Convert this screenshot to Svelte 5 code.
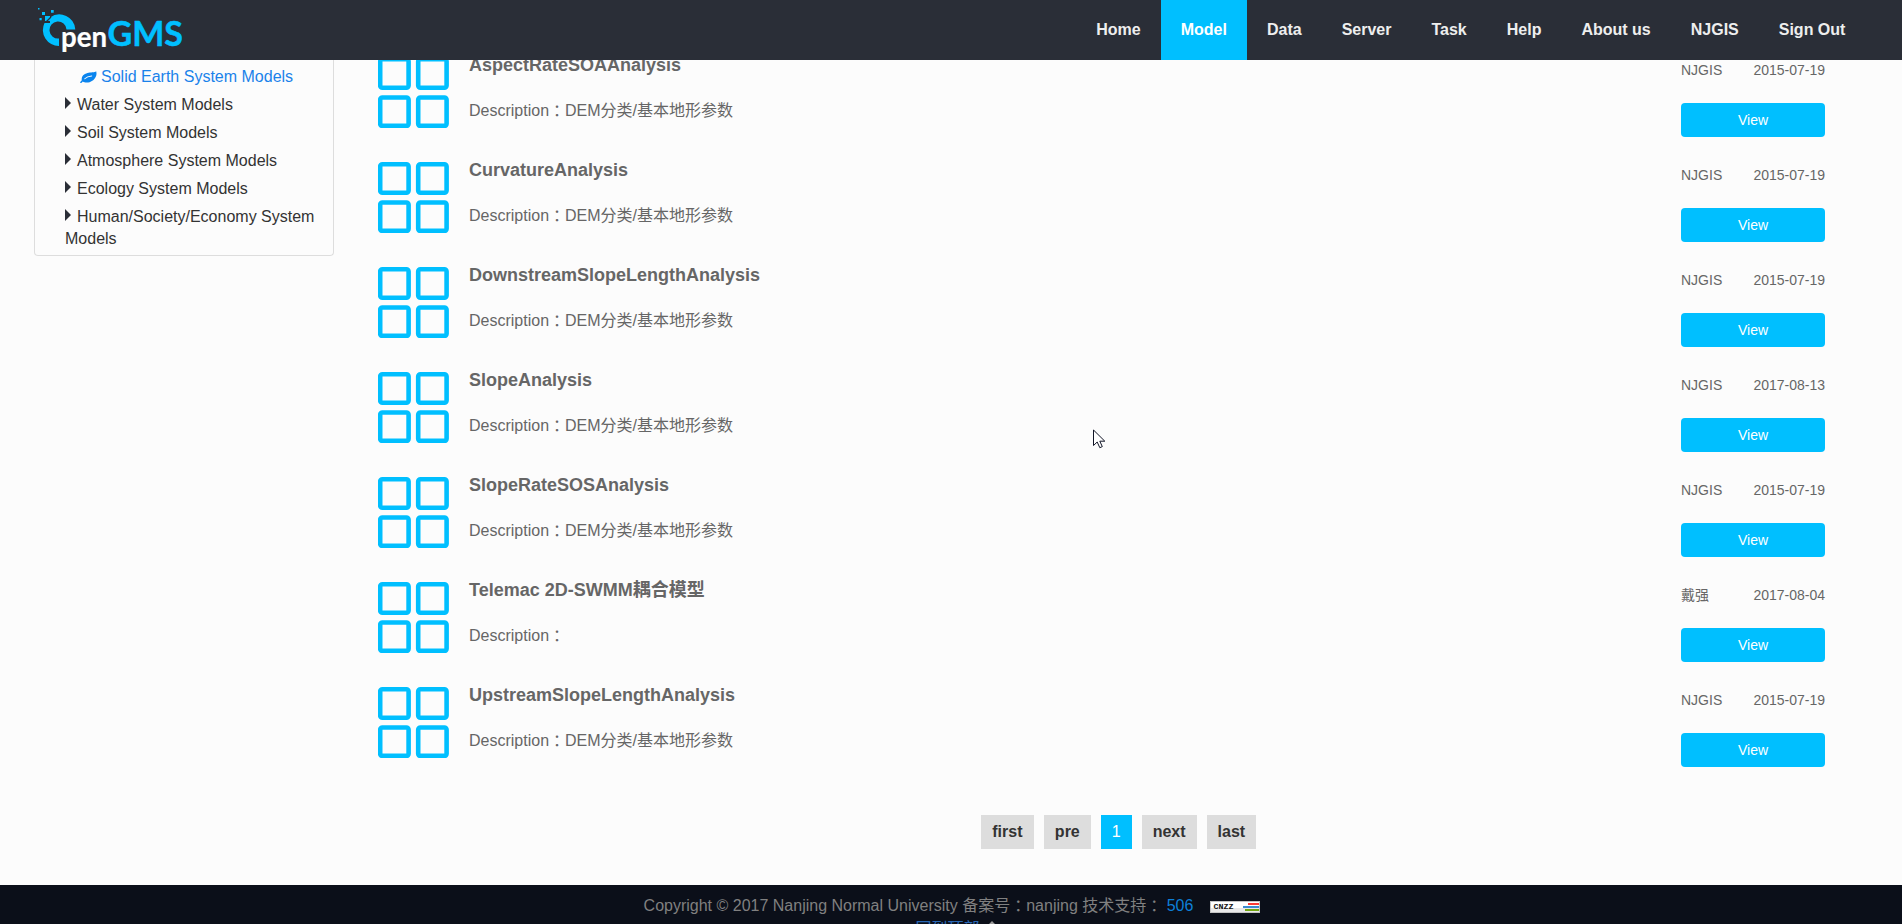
<script>
  const nav = ['Home', 'Model', 'Data', 'Server', 'Task', 'Help', 'About us', 'NJGIS', 'Sign Out'];
  const categories = [
    'Water System Models',
    'Soil System Models',
    'Atmosphere System Models',
    'Ecology System Models',
    'Human/Society/Economy System Models'
  ];
  const dem = 'DEM分类/基本地形参数';
  const models = [
    { name: 'AspectRateSOAAnalysis', text: dem, author: 'NJGIS', date: '2015-07-19' },
    { name: 'CurvatureAnalysis', text: dem, author: 'NJGIS', date: '2015-07-19' },
    { name: 'DownstreamSlopeLengthAnalysis', text: dem, author: 'NJGIS', date: '2015-07-19' },
    { name: 'SlopeAnalysis', text: dem, author: 'NJGIS', date: '2017-08-13' },
    { name: 'SlopeRateSOSAnalysis', text: dem, author: 'NJGIS', date: '2015-07-19' },
    { name: 'Telemac 2D-SWMM耦合模型', text: '', author: '戴强', date: '2017-08-04' },
    { name: 'UpstreamSlopeLengthAnalysis', text: dem, author: 'NJGIS', date: '2015-07-19' }
  ];
  const pages = ['first', 'pre', '1', 'next', 'last'];
</script>

<div class="page">
  <header>
    <svg class="logo" width="150" height="54" viewBox="36 4 150 54" role="img" aria-label="OpenGMS">
      <g fill="#00bfff">
        <path d="M50 17.500 A16 16 0 0 1 75.300 29.500 H66.500 A8.500 8.500 0 1 0 59 38.500 V46 A16 16 0 0 1 44.500 23 H50 Z" />
        <path d="M38 8h1.500v1.500H38zM42 12h3v3h-3zM51 10h2.700v2.700H51zM39.500 18h2.200v2.200h-2.200zM45 16h5v5h-5z" />
      </g>
      <path d="M46 22l5-5" stroke="#2a2e37" stroke-width="1.200" />
      <text x="61" y="46.500" class="pen" textLength="46" lengthAdjust="spacingAndGlyphs">pen</text>
      <text x="107.500" y="46.300" class="gms" textLength="75.500" lengthAdjust="spacingAndGlyphs">GMS</text>
    </svg>
    <nav>
      {#each nav as item}
        <a class:active={item === 'Model'}>{item}</a>
      {/each}
    </nav>
  </header>

  <main>
    <aside>
      <div class="item leaf">
        <svg width="17" height="13" viewBox="0 0 16 13" preserveAspectRatio="none">
          <path fill="#0a84ee" d="M15.200 0.200C13.800 1.500 10 1.100 7 2.100C3 3.400 1 5.900 1.700 9.200C1.300 9.900 0 10.800 0.200 11.700C0.400 12.500 1.400 12.200 2.600 10.500C4 11.600 6.500 12 9 11.200C13.500 9.700 16.600 5 15.200 0.200Z" />
          <path fill="none" stroke="#fcfcfc" stroke-width="1" stroke-linecap="round" d="M4.500 7.800C6 6 8 5.100 11 4.900" />
        </svg><span>Solid Earth System Models</span>
      </div>
      {#each categories as category}
        <div class="item"><i></i>{category}</div>
      {/each}
    </aside>

    <section>
      {#each models as model}
        <article>
          <svg class="grid" width="71" height="71" viewBox="0 0 71 71" fill="none" stroke="#00bfff" stroke-width="4.600">
            <rect x="2.200" y="2.300" width="28.400" height="28.400" rx="2.200" />
            <rect x="40.200" y="2.300" width="28.400" height="28.400" rx="2.200" />
            <rect x="2.200" y="40.500" width="28.400" height="28.400" rx="2.200" />
            <rect x="40.200" y="40.500" width="28.400" height="28.400" rx="2.200" />
          </svg>
          <div class="info">
            <h3>{model.name}</h3>
            <p>Description<span class="colon">：</span>{model.text}</p>
          </div>
          <div class="side">
            <div class="meta"><span>{model.author}</span><span>{model.date}</span></div>
            <button>View</button>
          </div>
        </article>
      {/each}
      <div class="pager">
        {#each pages as page}
          <a class:current={page === '1'}>{page}</a>
        {/each}
      </div>
    </section>
  </main>

  <footer>
    <div class="line">
      <span>Copyright © 2017 Nanjing Normal University 备案号<span class="colon">：</span>nanjing 技术支持<span class="colon">：</span> <a>506</a></span>
      <svg width="50" height="12" viewBox="0 0 50 12" shape-rendering="crispEdges">
        <path fill="#c4c4c4" d="M0 0h50v12H0z" />
        <path fill="#fff" d="M1 1h48v6H1z" />
        <path fill="#e9e9e9" d="M1 7h48v4H1z" />
        <path fill="#fb3b35" d="M38 2h11v2H38z" />
        <path fill="#3b8ad0" d="M33 5h16v2H33z" />
        <path fill="#71a411" d="M35 8h14v2H35z" />
        <text x="3.500" y="8" class="cnzz" textLength="20" lengthAdjust="spacingAndGlyphs">CNZZ</text>
      </svg>
    </div>
    <div class="top">
      <a>回到顶部</a>
      <svg width="12" height="12" viewBox="0 0 12 12"><path fill="#999" d="M6 0l6 6H8v6H4V6H0z" /></svg>
    </div>
  </footer>

  <svg class="cursor" width="13" height="20" viewBox="0 0 13 20">
    <path fill="#fff" stroke="#111526" d="M.5 1v15.500l3.700-3.500 2.600 5.700 2.500-1.100-2.500-5.400h5z" />
  </svg>
</div>

<style>
  :global(body) {
    margin: 0;
    overflow: hidden;
  }
  .page {
    position: relative;
    box-sizing: border-box;
    height: 924px;
    display: flex;
    flex-direction: column;
    overflow: hidden;
    background: #fcfcfc;
    font: 16px/22px Arial, 'Liberation Sans', 'Noto Sans CJK SC', sans-serif;
    color: #666;
  }
  header {
    flex: 0 0 60px;
    box-sizing: border-box;
    padding: 0 36.600px 0 36px;
    display: flex;
    justify-content: space-between;
    background: #2a2e37;
  }
  .logo {
    margin-top: 4px;
  }
  .logo text {
    font-family: Lato, sans-serif;
    font-weight: 700;
  }
  .pen {
    font-size: 28px;
    fill: #fff;
    stroke: #fff;
    stroke-width: 0.2px;
  }
  .gms {
    font-size: 34.500px;
    fill: #00bfff;
    stroke: #00bfff;
    stroke-width: 0.500px;
  }
  nav {
    display: flex;
  }
  nav a {
    padding: 0 20px;
    line-height: 59px;
    font-weight: 700;
    color: #eee;
  }
  nav a.active {
    background: #00bfff;
    color: #fff;
  }
  main {
    flex: 0 0 825px;
    height: 825px;
    display: flex;
    align-items: flex-start;
    overflow: hidden;
  }
  aside {
    box-sizing: border-box;
    width: 300px;
    height: 196px;
    margin-left: 34px;
    padding: 3px 10px 0 30px;
    border: 1px solid #ddd;
    border-top: 0;
    border-radius: 0 0 4px 4px;
    color: #333;
  }
  .item {
    padding: 3px 0;
  }
  .item i {
    display: inline-block;
    margin-right: 6px;
    vertical-align: 1px;
    border: solid transparent;
    border-width: 6.500px 0 6.500px 6px;
    border-left-color: #2a2e37;
  }
  .leaf {
    display: flex;
    align-items: center;
    gap: 4px;
    padding-left: 15px;
    color: #1a82ea;
  }
  section {
    flex: 1;
    margin-left: 44px;
    margin-right: 77px;
    margin-top: -3px;
  }
  article {
    display: flex;
    height: 105px;
  }
  .info {
    flex: 1;
    margin-left: 20px;
  }
  h3 {
    margin: -3px 0 0;
    height: 22px;
    font-size: 18px;
    line-height: 22px;
  }
  p {
    margin: 24px 0 0;
    line-height: 22px;
    height: 22px;
  }
  .colon {
    position: relative;
    top: 1px;
    font-family: 'Noto Sans CJK JP', sans-serif;
    line-height: 1;
  }
  .side {
    width: 144px;
    font-size: 14px;
  }
  .meta {
    display: flex;
    justify-content: space-between;
    height: 20px;
    line-height: 20px;
    margin-top: 3px;
  }
  button {
    display: block;
    width: 144px;
    height: 34px;
    margin-top: 23px;
    padding: 0;
    border: 0;
    border-radius: 4px;
    background: #00bfff;
    color: #fff;
    font: inherit;
  }
  .pager {
    display: flex;
    justify-content: center;
    gap: 10px;
    margin-top: 23px;
    margin-left: 34px;
  }
  .pager a {
    padding: 0 11px;
    line-height: 34px;
    background: #ddd;
    color: #333;
    font-weight: 700;
  }
  .pager a:first-child {
    padding: 0 11.400px;
  }
  .pager .current {
    background: #00bfff;
    color: #fff;
    font-weight: 400;
  }
  footer {
    flex: 1;
    background: #0b0f19;
    color: #808080;
    overflow: hidden;
  }
  footer a {
    color: #0d7fd8;
  }
  .line {
    display: flex;
    justify-content: center;
    align-items: center;
    gap: 17px;
    height: 22px;
    padding: 10px 0 0 2px;
  }
  .line svg {
    margin-top: 2px;
  }
  .cnzz {
    font: 700 7px 'Liberation Mono', monospace;
    fill: #111;
  }
  .top {
    display: flex;
    justify-content: center;
    gap: 6px;
    padding-left: 11px;
    margin-top: 1px;
  }
  .top a {
    color: #2867b5;
  }
  .top svg {
    margin-top: 3px;
  }
  .cursor {
    position: absolute;
    left: 1093px;
    top: 429px;
  }
</style>
